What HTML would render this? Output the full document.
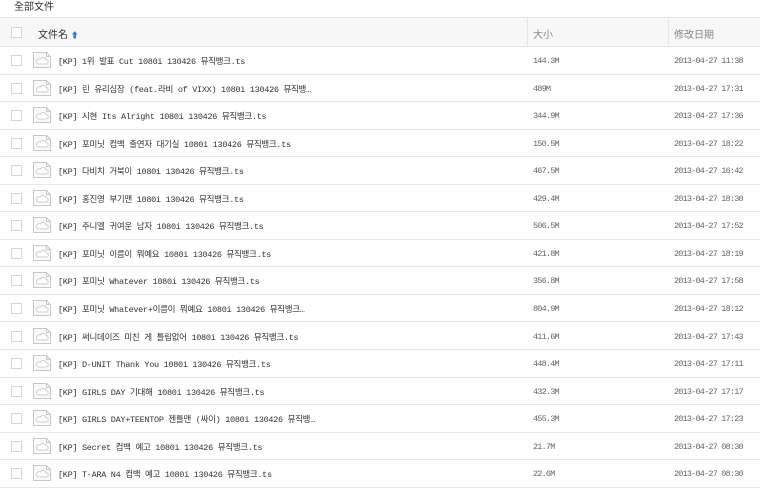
<!DOCTYPE html>
<html><head><meta charset="utf-8"><style>
*{margin:0;padding:0;box-sizing:border-box}
body{width:760px;height:494px;background:#fff;font-family:"Liberation Sans","Noto Sans CJK KR","Noto Sans CJK SC",sans-serif;position:relative;overflow:hidden}
.title{position:absolute;left:14px;top:1px;font-size:10px;color:#333;line-height:14px}
.hd{position:absolute;left:0;top:17px;width:760px;height:30px;background:#f7f7f7;border-top:1px solid #e6e6e6;border-bottom:1px solid #e6e6e6}
.cb{position:absolute;left:11px;width:11px;height:11px;border:1px solid #d6d6d6;background:#fff}
.hd span{position:absolute;top:8px;font-size:10px;color:#666}
.vd{position:absolute;top:0;width:1px;height:28px;background:#e6e6e6}
.row{position:absolute;left:0;width:760px;height:27.5px;border-bottom:1px solid #e8e8e8}
.row .cb{top:8px}
.ic{position:absolute;left:32px;top:4px;width:20px;height:18px}
.nm{position:absolute;left:58px;top:8px;font-size:8.5px;color:#333;white-space:nowrap;font-family:"Liberation Mono","Noto Sans CJK KR",monospace;letter-spacing:-0.3px}
.sz,.dt{position:absolute;top:9px;font-size:8.5px;color:#666;font-family:"Liberation Mono",monospace;letter-spacing:-0.8px}
.sz{left:533px}.dt{left:674px}
</style></head><body>
<div class="title">全部文件</div>
<div class="hd">
<div class="cb" style="top:9px"></div>
<span style="left:38px;color:#333">文件名 <b style="color:#2d7be0;font-size:8px">&#11014;</b></span>
<div class="vd" style="left:527px"></div><span style="left:533px;color:#888">大小</span>
<div class="vd" style="left:668px"></div><span style="left:674px;color:#888">修改日期</span>
</div>
<div id="rows"></div>
<script>
var d=[["[KP] 1위 발표 Cut 1080i 130426 뮤직뱅크.ts","144.3M","2013-04-27 11:38"],
["[KP] 린 유리심장 (feat.라비 of VIXX) 1080i 130426 뮤직뱅…","489M","2013-04-27 17:31"],
["[KP] 시현 Its Alright 1080i 130426 뮤직뱅크.ts","344.9M","2013-04-27 17:36"],
["[KP] 포미닛 컴백 출연자 대기실 1080i 130426 뮤직뱅크.ts","150.5M","2013-04-27 18:22"],
["[KP] 다비치 거북이 1080i 130426 뮤직뱅크.ts","467.5M","2013-04-27 16:42"],
["[KP] 홍진영 부기맨 1080i 130426 뮤직뱅크.ts","429.4M","2013-04-27 18:30"],
["[KP] 주니엘 귀여운 남자 1080i 130426 뮤직뱅크.ts","506.5M","2013-04-27 17:52"],
["[KP] 포미닛 이름이 뭐예요 1080i 130426 뮤직뱅크.ts","421.8M","2013-04-27 18:19"],
["[KP] 포미닛 Whatever 1080i 130426 뮤직뱅크.ts","356.8M","2013-04-27 17:58"],
["[KP] 포미닛 Whatever+이름이 뭐예요 1080i 130426 뮤직뱅크…","804.9M","2013-04-27 18:12"],
["[KP] 써니데이즈 미친 게 틀림없어 1080i 130426 뮤직뱅크.ts","411.6M","2013-04-27 17:43"],
["[KP] D-UNIT Thank You 1080i 130426 뮤직뱅크.ts","448.4M","2013-04-27 17:11"],
["[KP] GIRLS DAY 기대해 1080i 130426 뮤직뱅크.ts","432.3M","2013-04-27 17:17"],
["[KP] GIRLS DAY+TEENTOP 젠틀맨 (싸이) 1080i 130426 뮤직뱅…","455.3M","2013-04-27 17:23"],
["[KP] Secret 컴백 예고 1080i 130426 뮤직뱅크.ts","21.7M","2013-04-27 08:30"],
["[KP] T-ARA N4 컴백 예고 1080i 130426 뮤직뱅크.ts","22.6M","2013-04-27 08:30"]];
var ic='<svg class="ic" viewBox="0 0 20 18"><path d="M1.5 1.5h13l4 4v11h-17z" fill="#fafafa" stroke="#c8c8c8"/><path d="M14.5 1.5v4h4" fill="none" stroke="#c8c8c8"/><path d="M6 13h8a2.2 2.2 0 0 0 0-4.4a3 3 0 0 0-5.6-0.6a2.5 2.5 0 0 0-2.4 5z" fill="#fff" stroke="#cfcfcf"/></svg>';
var h='';d.forEach(function(r,i){h+='<div class="row" style="top:'+(47+i*27.55)+'px"><div class="cb"></div>'+ic+'<div class="nm">'+r[0]+'</div><div class="sz">'+r[1]+'</div><div class="dt">'+r[2]+'</div></div>'});
document.getElementById('rows').innerHTML=h;
</script>
</body></html>
